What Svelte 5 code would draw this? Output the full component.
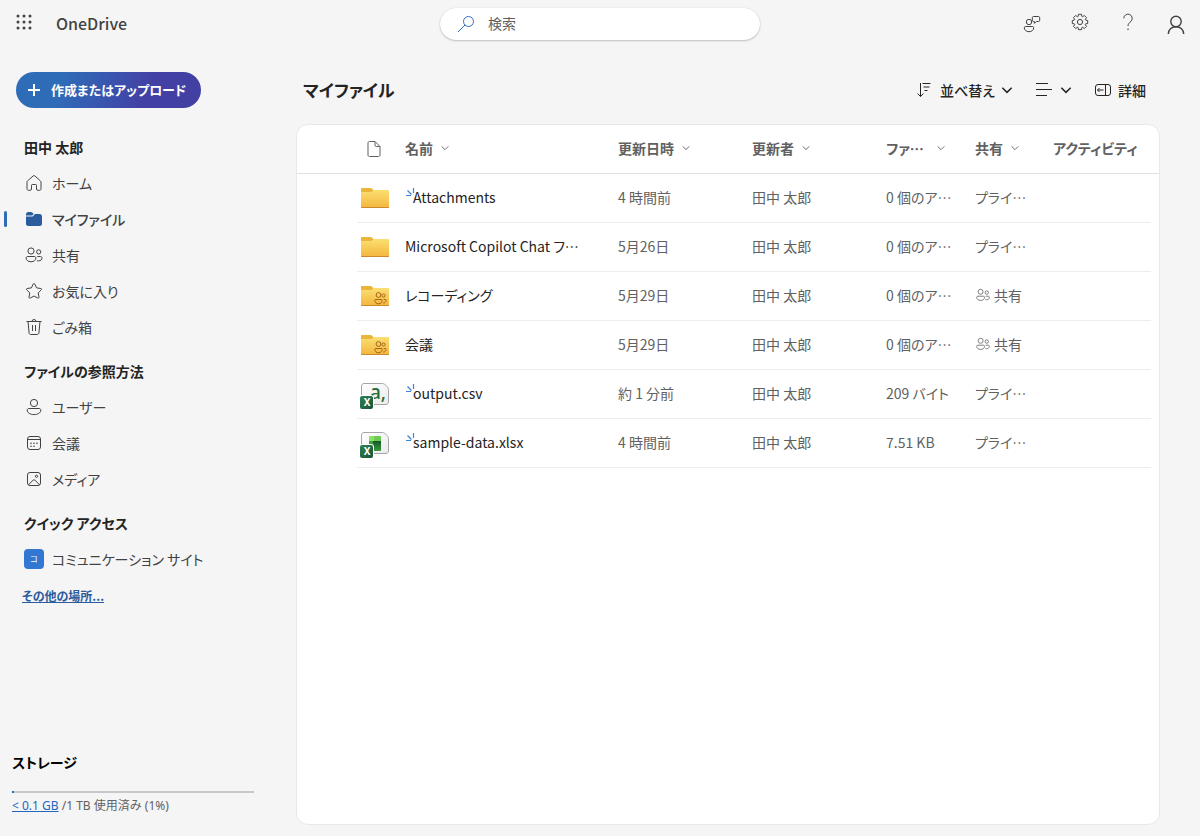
<script lang="ts">
  type FileKind = 'folder' | 'shared-folder' | 'csv' | 'xlsx';

  interface FileItem {
    kind: FileKind;
    name: string;
    isNew?: boolean;
    modified: string;
    author: string;
    size: string;
    sharing: string;
    shared?: boolean;
  }

  const navItems = [
    { icon: 'home', label: 'ホーム' },
    { icon: 'folder', label: 'マイファイル' },
    { icon: 'people', label: '共有' },
    { icon: 'star', label: 'お気に入り' },
    { icon: 'trash', label: 'ごみ箱' }
  ];

  const browseItems = [
    { icon: 'person', label: 'ユーザー' },
    { icon: 'calendar', label: '会議' },
    { icon: 'image', label: 'メディア' }
  ];

  const columns = [
    { key: 'name', label: '名前' },
    { key: 'modified', label: '更新日時' },
    { key: 'author', label: '更新者' },
    { key: 'size', label: 'ファ…' },
    { key: 'sharing', label: '共有' }
  ];

  const author = '田中 太郎';

  const files: FileItem[] = [
    { kind: 'folder', name: 'Attachments', isNew: true, modified: '4 時間前', author, size: '0 個のア…', sharing: 'プライ…' },
    { kind: 'folder', name: 'Microsoft Copilot Chat フ…', modified: '5月26日', author, size: '0 個のア…', sharing: 'プライ…' },
    { kind: 'shared-folder', name: 'レコーディング', modified: '5月29日', author, size: '0 個のア…', sharing: '共有', shared: true },
    { kind: 'shared-folder', name: '会議', modified: '5月29日', author, size: '0 個のア…', sharing: '共有', shared: true },
    { kind: 'csv', name: 'output.csv', isNew: true, modified: '約 1 分前', author, size: '209 バイト', sharing: 'プライ…' },
    { kind: 'xlsx', name: 'sample-data.xlsx', isNew: true, modified: '4 時間前', author, size: '7.51 KB', sharing: 'プライ…' }
  ];

  const storagePercent = 1;

  let active = $state('マイファイル');
  let query = $state('');
</script>

{#snippet icon(name: string, size = 20)}
  <svg class="icon" width={size} height={size} viewBox="0 0 20 20" aria-hidden="true">
    {#if name === 'home'}
      <path d="M9.2 2.9a1.2 1.2 0 0 1 1.6 0l5.6 5a1.8 1.8 0 0 1 .6 1.3v6.6c0 .9-.6 1.5-1.5 1.5h-1.7c-.8 0-1.3-.5-1.3-1.3v-3.7c0-.5-.3-.8-.8-.8H8.3c-.5 0-.8.3-.8.8V16c0 .8-.5 1.3-1.3 1.3H4.5c-.9 0-1.5-.6-1.5-1.5V9.2c0-.5.2-1 .6-1.3z" />
    {:else if name === 'folder'}
      <g class="solid">
        <path d="M2 6.5V5.3C2 4 3 3 4.3 3h2.5c.5 0 1 .2 1.4.5L9.7 5 8.4 6.2c-.2.2-.5.3-.8.3z" />
        <path d="M2 7.5h5.7c.6 0 1.1-.2 1.5-.6L11 5h4.7C17 5 18 6 18 7.3v7.4c0 1.3-1 2.300-2.300 2.300H4.300C3 17 2 16 2 14.700z" />
      </g>
    {:else if name === 'people'}
      <circle cx="7" cy="6" r="3.1" />
      <circle cx="14.700" cy="6.900" r="2.100" />
      <path d="M3.600 11.500h6.800c.9 0 1.500.6 1.500 1.500 0 2.200-2 3.800-4.900 3.800S2.100 15.200 2.100 13c0-.9.6-1.500 1.500-1.500z" />
      <path d="M13.300 11.500h3.200c.9 0 1.500.6 1.500 1.400 0 1.900-1.600 3-3.500 3-.6 0-1.100-.1-1.600-.2" />
    {:else if name === 'star'}
      <path d="M9.3 2.9c.3-.6 1.1-.6 1.4 0l1.900 4 4.300.6c.7.1.9.9.4 1.400l-3.100 3 .8 4.300c.1.7-.6 1.200-1.200.9L10 15l-3.800 2.100c-.6.3-1.300-.2-1.200-.9l.8-4.300-3.100-3c-.5-.5-.3-1.300.4-1.400l4.300-.6z" />
    {:else if name === 'trash'}
      <path d="M2.500 4.500h15M8 4.500a2 2 0 0 1 4 0M4 4.500l1.100 11.400c.1 1 .8 1.600 1.700 1.600h6.400c.9 0 1.600-.6 1.700-1.600L16 4.500M8.500 8v6M11.500 8v6" />
    {:else if name === 'person'}
      <circle cx="10" cy="6" r="3.600" />
      <path d="M5 11.500h10c1.100 0 1.800.7 1.800 1.600 0 2.700-3 4.500-6.800 4.500s-6.800-1.800-6.800-4.500c0-.9.7-1.600 1.800-1.600z" />
    {:else if name === 'calendar'}
      <rect x="3.500" y="3.500" width="13" height="13" rx="2.500" />
      <path d="M3.500 6.500h13" />
      <path class="dots" d="M7 10.200h.01M10 10.200h.01M13 10.200h.01M7 13.200h.01M10 13.200h.01" />
    {:else if name === 'image'}
      <rect x="3.500" y="3.500" width="13" height="13" rx="2.500" />
      <circle cx="12.500" cy="7.300" r="1.100" />
      <path d="M4.300 15.900l4.800-4.700a1.300 1.300 0 0 1 1.800 0l4.800 4.700" />
    {:else if name === 'search'}
      <circle cx="12.500" cy="7.500" r="5" />
      <path d="M9 11l-7 7" />
    {:else if name === 'feedback'}
      <circle cx="7" cy="8" r="2.700" />
      <path d="M3.500 12.500h7c.7 0 1.200.5 1.200 1.200 0 2.300-2 4-4.700 4s-4.700-1.700-4.700-4c0-.7.5-1.200 1.200-1.200zM11.500 2.500h5c.7 0 1.200.5 1.200 1.200v2.600c0 .7-.5 1.200-1.200 1.200h-2L12.300 9.300V7.500h-.8c-.7 0-1.200-.5-1.200-1.200V3.700c0-.7.5-1.200 1.200-1.200z" />
    {:else if name === 'settings'}
      <circle cx="10" cy="10" r="2.600" />
      <path d="M8.470 2.300L11.530 2.300L11.850 4.370L12.640 4.700L14.330 3.460L16.540 5.670L15.300 7.360L15.630 8.150L17.700 8.470L17.700 11.530L15.630 11.850L15.300 12.640L16.540 14.330L14.330 16.540L12.640 15.300L11.850 15.630L11.530 17.700L8.470 17.700L8.150 15.630L7.360 15.300L5.670 16.540L3.460 14.330L4.700 12.640L4.370 11.850L2.300 11.530L2.300 8.470L4.370 8.150L4.700 7.360L3.460 5.670L5.670 3.460L7.360 4.700L8.150 4.370Z" />
    {:else if name === 'help'}
      <path d="M5.800 6.300a4.200 4.200 0 1 1 7.200 3c-1.500 1.500-3 2.300-3 4.700" />
      <path class="dots" d="M10 17.300h.01" />
    {:else if name === 'account'}
      <circle cx="10" cy="7.500" r="5.200" />
      <path d="M2.300 20c0-4.300 3.200-7.300 7.700-7.300s7.700 3 7.700 7.300" />
    {:else if name === 'sort'}
      <path d="M5.500 3v13.500M2.500 13.500l3 3 3-3M7.500 3.500h8M8.500 7h6M9.500 10.500h3" />
    {:else if name === 'list'}
      <path d="M2 3.500h12M2 9.500h16M2 15.500h11" />
    {:else if name === 'details'}
      <rect x="2.500" y="4.500" width="15" height="11" rx="2.500" />
      <path d="M12.500 4.500v11M10.500 10h-6M6.500 8l-2 2 2 2" />
    {:else if name === 'plus'}
      <path d="M10 4v12M4 10h12" />
    {:else if name === 'document'}
      <path d="M5.500 2.500h5.500l5 5v8.500c0 .9-.6 1.500-1.500 1.500h-9c-.9 0-1.500-.6-1.500-1.500V4c0-.9.6-1.500 1.500-1.500zM11 2.700v3.500c0 .8.5 1.300 1.300 1.300h3.500" />
    {/if}
  </svg>
{/snippet}

{#snippet chevron(size: number)}
  <svg class="chevron" width={size} height={size} viewBox="0 0 12 12" aria-hidden="true">
    <path d="M2 4l4 4 4-4" />
  </svg>
{/snippet}

{#snippet excelBadge()}
  <rect x="-1" y="15" width="15" height="15" rx="3" fill="#fff" />
  <rect x="0" y="16" width="13" height="13" rx="2" fill="url(#badge-fill)" />
  <text x="7" y="26" text-anchor="middle" class="badge-letter">X</text>
{/snippet}

{#snippet fileIcon(kind: FileKind)}
  <svg class="file-icon" width="30" height="30" viewBox="0 -1 30 30" aria-hidden="true">
    {#if kind === 'folder' || kind === 'shared-folder'}
      <path d="M1 5c0-.6.4-1 1-1h8.500c.5 0 .9.2 1.300.5L13.500 6v4H1z" fill="#e9b53b" />
      <path d="M1 8h9.500c.6 0 1.200-.2 1.600-.6L13.500 6H28c.6 0 1 .4 1 1v16c0 .6-.4 1-1 1H2c-.6 0-1-.4-1-1z" fill="url(#folder-fill)" />
      <path d="M1 23h28c0 .6-.4 1-1 1H2c-.6 0-1-.4-1-1z" fill="#c98a2c" />
      {#if kind === 'shared-folder'}
        <g fill="none" stroke="#a5621a">
          <circle cx="18.500" cy="13" r="2.400" />
          <circle cx="23.500" cy="13.500" r="1.600" />
          <path d="M15.500 17.500h6.200c.3 0 .5.200.5.500 0 2.200-1.400 3.800-3.700 3.800S14.800 20.200 14.800 18c0-.3.300-.5.700-.5z" />
          <path d="M23.800 17.500h1.700c.4 0 .6.300.6.700 0 1.700-1.100 2.800-2.900 2.800" />
        </g>
      {/if}
    {:else}
      <path d="M4 3.500h18.500c2 0 6 3.500 6 6v12.500c0 1.400-1.100 2.500-2.500 2.500H4c-1.400 0-2.500-1.100-2.500-2.500V6c0-1.400 1.100-2.500 2.500-2.500z" fill="url(#sheet-fill)" stroke="#a6a6a6" />
      {#if kind === 'csv'}
        <text x="10" y="19" class="csv-letter">a,</text>
      {:else}
        <rect x="9" y="7" width="6" height="6" rx="1" fill="#8be065" />
        <rect x="14" y="7" width="7" height="6" rx="1" fill="#6bcb52" />
        <path d="M9 12h4v6h-3c-.6 0-1-.4-1-1z" fill="#3fa044" />
        <path d="M13 12h8v9c0 .6-.4 1-1 1h-7z" fill="url(#leaf-fill)" />
      {/if}
      {@render excelBadge()}
    {/if}
  </svg>
{/snippet}

{#snippet navList(items: { icon: string; label: string }[])}
  <ul>
    {#each items as item}
      <li>
        <a
          href="#{item.icon}"
          class="nav-link"
          class:active={active === item.label}
          onclick={() => (active = item.label)}
        >
          {@render icon(item.icon)}
          <span class="nav-label">{item.label}</span>
        </a>
      </li>
    {/each}
  </ul>
{/snippet}

<svg class="defs" width="0" height="0" aria-hidden="true">
  <defs>
    <linearGradient id="folder-fill" x1="0" y1="0" x2="0" y2="1">
      <stop offset="0" stop-color="#fbdf72" />
      <stop offset="1" stop-color="#f3b63c" />
    </linearGradient>
    <linearGradient id="sheet-fill" x1="0" y1="0" x2="1" y2="1">
      <stop offset="0" stop-color="#ffffff" />
      <stop offset="1" stop-color="#ebebeb" />
    </linearGradient>
    <linearGradient id="badge-fill" x1="0" y1="0" x2="1" y2="1">
      <stop offset="0" stop-color="#2e8256" />
      <stop offset="1" stop-color="#185234" />
    </linearGradient>
    <linearGradient id="leaf-fill" x1="0" y1="0" x2="0" y2="1">
      <stop offset="0" stop-color="#14572a" />
      <stop offset="1" stop-color="#3a9a3c" />
    </linearGradient>
  </defs>
</svg>

<div class="app">
  <header class="topbar">
    <div class="brand">
      <button type="button" class="icon-button launcher" aria-label="アプリ起動ツール">
        <svg width="16" height="16" viewBox="0 0 16 16" aria-hidden="true">
          {#each [2, 8, 14] as cy}
            {#each [2, 8, 14] as cx}
              <circle {cx} {cy} r="1.500" />
            {/each}
          {/each}
        </svg>
      </button>
      <a href="#onedrive" class="brand-name">OneDrive</a>
    </div>
    <label class="search">
      {@render icon('search')}
      <input type="search" placeholder="検索" aria-label="検索" bind:value={query} />
    </label>
    <div class="actions">
      <button type="button" class="icon-button" aria-label="フィードバック">{@render icon('feedback')}</button>
      <button type="button" class="icon-button raised" aria-label="設定">{@render icon('settings')}</button>
      <button type="button" class="icon-button raised" aria-label="ヘルプ">{@render icon('help')}</button>
      <button type="button" class="icon-button account" aria-label="アカウント">{@render icon('account')}</button>
    </div>
  </header>

  <div class="body">
    <aside class="sidebar">
      <button type="button" class="create">
        {@render icon('plus')}
        <span>作成またはアップロード</span>
      </button>

      <nav>
        <section>
          <h2>{author}</h2>
          {@render navList(navItems)}
        </section>
        <section>
          <h2>ファイルの参照方法</h2>
          {@render navList(browseItems)}
        </section>
        <section>
          <h2>クイック アクセス</h2>
          <a href="#site" class="nav-link">
            <span class="site-logo">コ</span>
            <span class="nav-label">コミュニケーション サイト</span>
          </a>
          <a href="#places" class="more">その他の場所...</a>
        </section>
      </nav>

      <div class="storage">
        <h2>ストレージ</h2>
        <div class="meter"><div class="meter-fill" style="width: {storagePercent}%"></div></div>
        <p><a href="#storage">&lt; 0.1 GB</a> /1 TB 使用済み (1%)</p>
      </div>
    </aside>

    <main>
      <div class="heading">
        <h1>マイファイル</h1>
        <div class="commands">
          <button type="button" class="command">
            {@render icon('sort')}
            <span>並べ替え</span>
            {@render chevron(14)}
          </button>
          <button type="button" class="command" aria-label="表示の切り替え">
            {@render icon('list')}
            {@render chevron(14)}
          </button>
          <button type="button" class="command">
            {@render icon('details')}
            <span>詳細</span>
          </button>
        </div>
      </div>

      <div class="panel">
        <table>
          <colgroup>
            <col class="col-select" />
            <col class="col-icon" />
            <col />
            <col class="col-date" />
            <col class="col-date" />
            <col class="col-size" />
            <col class="col-sharing" />
            <col class="col-activity" />
            <col class="col-end" />
          </colgroup>
          <thead>
            <tr>
              <th></th>
              <th class="icon-cell">{@render icon('document')}</th>
              {#each columns as column}
                <th scope="col">
                  <button type="button" class="column-button">
                    <span class="column-label" class:clipped={column.key === 'size'}>{column.label}</span>
                    {@render chevron(10)}
                  </button>
                </th>
              {/each}
              <th scope="col">アクティビティ</th>
              <th></th>
            </tr>
          </thead>
          <tbody>
            {#each files as file}
              <tr>
                <td class="bare"></td>
                <td class="icon-cell">{@render fileIcon(file.kind)}</td>
                <td>
                  <a href="#{file.name}" class="file-name">
                    {#if file.isNew}
                      <svg class="new-mark" width="8" height="20" viewBox="0 0 8 20" aria-hidden="true">
                        <path d="M1 8.500h5M2.500 3.500l4 4M8.500 1v5" />
                      </svg>
                    {/if}
                    <span>{file.name}</span>
                  </a>
                </td>
                <td>{file.modified}</td>
                <td>{file.author}</td>
                <td>{file.size}</td>
                <td>
                  <span class="sharing">
                    {#if file.shared}{@render icon('people', 16)}{/if}
                    {file.sharing}
                  </span>
                </td>
                <td></td>
                <td class="bare"></td>
              </tr>
            {/each}
          </tbody>
        </table>
      </div>
    </main>
  </div>
</div>

<style>
  :global(body) {
    margin: 0;
    background: #f5f5f5;
  }

  .app {
    display: flex;
    flex-direction: column;
    min-height: 100vh;
    color: #424242;
    font-family: 'Noto Sans CJK JP', 'Noto Sans', sans-serif;
    font-size: 14px;
    line-height: 20px;
    font-feature-settings: 'palt';
  }

  button,
  input {
    font: inherit;
    font-feature-settings: inherit;
    color: inherit;
    background: none;
    border: 0;
    padding: 0;
  }

  button {
    cursor: pointer;
  }

  a {
    color: inherit;
    text-decoration: none;
  }

  h1,
  h2,
  p,
  ul {
    margin: 0;
    padding: 0;
  }

  ul {
    list-style: none;
  }

  .defs {
    position: absolute;
  }

  .icon {
    flex: none;
    display: block;
    fill: none;
    stroke: currentColor;
    stroke-linejoin: round;
    overflow: visible;
  }

  .icon .solid {
    fill: #2b5c9e;
    stroke: none;
  }

  .icon .dots {
    stroke-width: 1.6;
    stroke-linecap: round;
  }

  .chevron {
    flex: none;
    fill: none;
    stroke: currentColor;
    stroke-width: 1.3;
  }

  /* Top bar */
  .topbar {
    display: grid;
    grid-template-columns: 1fr 320px 1fr;
    height: 48px;
    align-items: center;
  }

  .brand {
    display: flex;
    align-items: center;
    gap: 8px;
  }

  .brand-name {
    padding-bottom: 2px;
    font-size: 16px;
    font-weight: 500;
  }

  .icon-button {
    display: flex;
    align-items: center;
    justify-content: center;
    box-sizing: border-box;
    width: 48px;
    height: 44px;
  }

  .icon-button.raised,
  .launcher {
    padding-bottom: 4px;
  }

  .launcher {
    fill: #424242;
  }

  .account .icon {
    stroke-width: 1.4;
  }

  .search {
    display: flex;
    align-items: center;
    gap: 12px;
    height: 32px;
    padding: 0 16px;
    border-radius: 16px;
    background: #fff;
    box-shadow: 0 0 1px rgba(0, 0, 0, 0.2), 0 1px 2px rgba(0, 0, 0, 0.2);
    color: #2f6fc4;
  }

  .search input {
    flex: 1;
    min-width: 0;
    padding-bottom: 2px;
    outline: none;
    color: #424242;
  }

  .search input::placeholder {
    color: #616161;
    opacity: 1;
  }

  .actions {
    display: flex;
    justify-content: flex-end;
  }

  /* Sidebar */
  .body {
    flex: 1;
    display: flex;
  }

  .sidebar {
    display: flex;
    flex-direction: column;
    flex: none;
    width: 296px;
    padding: 24px 0 20px;
    box-sizing: border-box;
  }

  .create {
    display: flex;
    align-items: center;
    align-self: flex-start;
    gap: 7px;
    height: 36px;
    margin: 0 0 21px 16px;
    padding: 0 15px 0 8px;
    border-radius: 18px;
    background: linear-gradient(110deg, #2f6cb8 25%, #4340a4 70%);
    color: #fff;
    font-size: 13px;
    font-weight: 700;
  }

  .create .icon {
    stroke-width: 2;
  }

  section + section {
    margin-top: 8px;
  }

  h2 {
    padding-left: 24px;
    color: #242424;
    font-size: 14px;
    font-weight: 700;
    line-height: 36px;
  }

  .nav-link {
    position: relative;
    display: flex;
    align-items: center;
    gap: 8px;
    height: 36px;
    padding-left: 24px;
  }

  .nav-label {
    padding-bottom: 1px;
  }

  .nav-link.active {
    font-weight: 500;
  }

  .nav-link.active::before {
    content: '';
    position: absolute;
    left: 4px;
    width: 3px;
    height: 16px;
    border-radius: 2px;
    background: #2f6cb8;
  }

  .site-logo {
    display: flex;
    align-items: center;
    justify-content: center;
    width: 20px;
    height: 20px;
    border-radius: 4px;
    background: #3277d1;
    color: #fff;
    font-size: 8px;
  }

  .more {
    display: inline-block;
    margin-left: 22px;
    color: #2b5c9e;
    font-size: 12px;
    font-weight: 700;
    line-height: 38px;
    text-decoration: underline;
  }

  .storage {
    margin: auto 42px 0 12px;
    font-family: 'Noto Sans', 'Noto Sans CJK JP', sans-serif;
    font-size: 12px;
    font-feature-settings: normal;
    color: #616161;
  }

  .storage h2 {
    padding: 0;
    color: #000;
    font-feature-settings: 'palt';
  }

  .meter {
    height: 2px;
    margin-top: 10px;
    background: #c8c8c8;
  }

  .meter-fill {
    height: 100%;
    background: #2f6cb8;
  }

  .storage p {
    margin-top: 3px;
  }

  .storage a {
    color: #2266c0;
    text-decoration: underline;
  }

  /* Main area */
  main {
    flex: 1;
    display: flex;
    flex-direction: column;
    min-width: 0;
    padding: 24px 40px 11px 0;
  }

  .heading {
    display: flex;
    align-items: center;
    justify-content: space-between;
    height: 36px;
    margin-bottom: 16px;
    padding: 0 14px 0 7px;
    color: #242424;
  }

  h1 {
    font-size: 17px;
    font-weight: 700;
    line-height: 28px;
  }

  .commands {
    display: flex;
    gap: 20px;
  }

  .command {
    display: flex;
    align-items: center;
    gap: 5px;
    font-weight: 500;
  }

  .panel {
    flex: 1;
    border: 1px solid #e8e8e8;
    border-radius: 12px;
    background: #fff;
    overflow: hidden;
  }

  table {
    width: 100%;
    table-layout: fixed;
    border-collapse: separate;
    border-spacing: 0;
    color: #616161;
  }

  .col-select {
    width: 60px;
  }

  .col-icon {
    width: 36px;
  }

  .col-date {
    width: 134px;
  }

  .col-size {
    width: 89px;
  }

  .col-sharing {
    width: 78px;
  }

  .col-activity {
    width: 110px;
  }

  .col-end {
    width: 8px;
  }

  th,
  td {
    box-sizing: border-box;
    height: 49px;
    padding: 0 0 2px 12px;
    border-bottom: 1px solid #ededed;
    text-align: left;
    font-weight: 400;
    white-space: nowrap;
  }

  th {
    border-color: #e0e0e0;
    font-weight: 700;
  }

  td.bare {
    border: 0;
    padding: 0;
  }

  .icon-cell {
    padding: 0 0 0 3px;
  }

  th.icon-cell {
    padding-left: 7px;
  }

  .column-button {
    display: flex;
    align-items: center;
    gap: 7px;
    font-weight: 700;
    text-align: left;
  }

  .column-button .chevron {
    stroke-width: 1.1;
  }

  .column-label.clipped {
    min-width: 43px;
  }

  .file-icon {
    display: block;
    overflow: visible;
  }

  .badge-letter,
  .csv-letter {
    font-family: 'Noto Sans', sans-serif;
  }

  .badge-letter {
    fill: #fff;
    font-size: 10px;
    font-weight: 700;
  }

  .csv-letter {
    fill: #276b35;
    font-size: 19px;
    font-weight: 500;
  }

  .file-name {
    display: flex;
    align-items: center;
    color: #242424;
  }

  .new-mark {
    fill: none;
    stroke: #3b82d8;
    stroke-width: 1.2;
    overflow: visible;
  }

  .sharing {
    display: flex;
    align-items: center;
    gap: 3px;
  }
</style>
